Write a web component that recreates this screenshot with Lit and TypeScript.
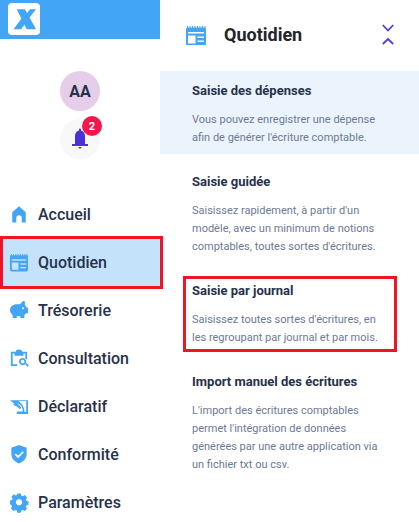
import { LitElement, html, css, svg } from "lit";
import { customElement } from "lit/decorators.js";

const calendar = svg`<path fill-rule="evenodd" d="M1.500 2.500h17A1.500 1.500 0 0 1 20 4v15a1.500 1.500 0 0 1-1.500 1.500h-17A1.500 1.500 0 0 1 0 19V4a1.500 1.500 0 0 1 1.500-1.500zM2 7h16v1.500H2zM2 10.500h7.500v8H2zM11.500 11.500H18V13h-6.500zM11.500 15.500H18V17h-6.500z"/><path d="M1 1h1v2H1zM3.500 1h1v2h-1zM6 1h1v2H6zM8.500 1h1v2h-1zM11 1h1v2h-1zM13.500 1h1v2h-1zM16 1h1v2h-1zM18.500 1h1v2h-1z"/>`;

const icons: Record<string, unknown> = {
  home: svg`<path d="M10 1.500 17.500 8V19.500H13v-5a3 3 0 0 0-6 0v5H2.500V8z"/>`,
  cal: calendar,
  piggy: svg`<path fill-rule="evenodd" d="M15.500 0c.6 0 1 .3 1 1v3.500c1 .7 1.700 1.700 2 3H20v6h-2.200c-.5.800-1.100 1.500-1.800 2V19h-4.500v-2h-4v2H3v-3.300C1.200 14.200 0 12.200 0 10 0 6 3.500 3.500 7.500 3.500H11.500C12.500 1.500 14 0 15.500 0zM14.500 7a1 1 0 1 0 .01 0z"/>`,
  clip: svg`<path fill-rule="evenodd" d="M1 3h5.500a3.500 2.500 0 0 1 7 0H19v8h-2V5h-2v2.500H5V5H3v12h5v2H1z"/><path fill-rule="evenodd" d="M14 10a4 4 0 1 0 .01 0zm0 2a2 2 0 1 1-.01 0zM16.500 16.500l1.400-1.400 3.100 3.100-1.400 1.400z"/>`,
  decl: svg`<path fill-rule="evenodd" d="M0 3.500h20v15.500H7.500v-3H14c1-2.500-1.500-7.500-6-9.500l4.500 5.500-1.500 1.500C8 10 5 9 3 8.500L5 7.500zM9.500 4.500l8.500 0V16.500H16c.5-4-2.500-9-6.500-12z"/>`,
  shield: svg`<path fill-rule="evenodd" d="M10 0 18.500 3v7c0 5-3.500 8.500-8.500 10.500C5 18.500 1.500 15 1.500 10V3zm4 7-5 5-2.500-2.500-1.300 1.300L9 14.600l6.300-6.300z"/>`,
  gear: svg`<path fill-rule="evenodd" d="M8 .5h4l.5 2.400 1.700.7 2.100-1.300 2.700 2.800-1.400 2 .7 1.700 2.200.5v3.800l-2.200.5-.7 1.700 1.400 2-2.700 2.800-2.100-1.300-1.700.7-.5 2.400H8l-.5-2.400-1.700-.7-2.100 1.300-2.700-2.800 1.400-2-.7-1.700L0 12.200V8.400l2.200-.5.700-1.700-1.400-2 2.700-2.800 2.100 1.300 1.700-.7zM10 6.800a3.500 3.500 0 1 0 .01 0z"/>`,
};

const nav = [
  ["home", "Accueil"],
  ["cal", "Quotidien"],
  ["piggy", "Trésorerie"],
  ["clip", "Consultation"],
  ["decl", "Déclaratif"],
  ["shield", "Conformité"],
  ["gear", "Paramètres"],
];

const items: [string, string[], boolean?][] = [
  ["Saisie des dépenses", ["Vous pouvez enregistrer une dépense", "afin de générer l'écriture comptable."], true],
  ["Saisie guidée", ["Saisissez rapidement, à partir d'un", "modèle, avec un minimum de notions", "comptables, toutes sortes d'écritures."]],
  ["Saisie par journal", ["Saisissez toutes sortes d'écritures, en", "les regroupant par journal et par mois."]],
  ["Import manuel des écritures", ["L'import des écritures comptables", "permet l'intégration de données", "générées par une autre application via", "un fichier txt ou csv."]],
];

@customElement("app-root")
export class AppRoot extends LitElement {
  static styles = css`
    :host {
      display: block;
      width: 419px;
      height: 522px;
      overflow: hidden;
      position: relative;
      background: #fff;
      font-family: Roboto, "Liberation Sans", sans-serif;
    }
    .page { display: flex; height: 522px; }
    .left { width: 160px; flex: none; display: flex; flex-direction: column; align-items: stretch; }
    .brand { height: 39px; background: #42a5f5; padding: 3px 0 0 8px; box-sizing: border-box; flex: none; }
    .logo { width: 32px; height: 32px; display: block; }
    .avatar {
      width: 40px; height: 40px; border-radius: 50%; background: #e6cdea; color: #27314b;
      margin: 32px auto 0; display: flex; align-items: center; justify-content: center;
      font-size: 16px; font-weight: 700; flex: none;
    }
    .bell {
      width: 40px; height: 40px; border-radius: 50%; background: #f8f8f8; flex: none;
      margin: 8px auto 0; position: relative; display: flex; align-items: center; justify-content: center;
    }
    .bell svg { width: 18px; height: 22px; display: block; }
    .badge {
      position: absolute; left: 22px; top: -3px; width: 20px; height: 20px; border-radius: 50%;
      background: #f5164e; color: #fff; font-size: 11px; font-weight: 700;
      display: flex; align-items: center; justify-content: center;
    }
    nav { margin-top: 31px; display: flex; flex-direction: column; }
    .nav-item {
      height: 48px; flex: none; display: flex; align-items: center; gap: 10px; padding-left: 10px;
      font-size: 16px; font-weight: 500; color: #27314b;
    }
    .nav-item.on { background: #c5e2fb; }
    .nav-item svg { width: 18px; height: 18px; fill: #42a5f5; flex: none; display: block; overflow: visible; }
    .right { flex: 1; display: flex; flex-direction: column; }
    .head { height: 71px; flex: none; display: flex; align-items: center; padding: 0 25px 2px 26px; box-sizing: border-box; }
    .head .ic { width: 20px; height: 20px; fill: #42a5f5; flex: none; display: block; }
    .head h1 { margin: 0 0 0 18px; font-size: 18px; font-weight: 700; color: #212529; flex: 1; }
    .head .ch { width: 12px; height: 24px; display: block; fill: none; stroke: #4c3fe0; stroke-width: 1.800; }
    .item { padding: 11px 20px 7px 32px; margin-bottom: 8px; }
    .item.on { background: #ebf4fd; }
    .item h2 { margin: 0 0 11px; font-size: 13px; line-height: 18px; font-weight: 700; color: #27314b; }
    .item p { margin: 0; font-size: 11px; line-height: 18px; color: #6c7a93; white-space: nowrap; }
    .mark { position: absolute; border: 3px solid #f01426; box-sizing: border-box; pointer-events: none; }
    .m1 { left: 0; top: 236px; width: 163px; height: 53px; }
    .m2 { left: 183px; top: 276px; width: 214px; height: 76px; }
  `;

  render() {
    return html`
      <div class="page">
        <div class="left">
          <div class="brand">
            <svg class="logo" viewBox="0 0 32 32">
              <rect width="32" height="32" rx="4" fill="#fff"/>
              <path fill="#42a5f5" d="M8.700 6.300H17L28 26.300H18.700z"/>
              <path fill="#42a5f5" d="M22 6.300h6l-7 9-2.800-4zM5.500 26.300 13.500 15.500l4.500 4-5 6.800z"/>
            </svg>
          </div>
          <div class="avatar">AA</div>
          <div class="bell">
            <svg viewBox="0 0 18 22">
              <path fill="#4a33d6" d="M8 1.500a1 1 0 0 1 2 0V2.500c2.500.8 4 2.800 4 5.500v8.500H4V8c0-2.700 1.500-4.700 4-5.500z"/>
              <path fill="#4a33d6" d="M1 16h16v2H1zM7 19h4l-2 2z"/>
            </svg>
            <span class="badge">2</span>
          </div>
          <nav>
            ${nav.map(
              ([ic, label], i) => html`<div class="nav-item ${i === 1 ? "on" : ""}">
                <svg viewBox="0 0 20 20">${icons[ic]}</svg><span>${label}</span>
              </div>`
            )}
          </nav>
        </div>
        <div class="right">
          <div class="head">
            <svg class="ic" viewBox="0 0 20 20">${calendar}</svg>
            <h1>Quotidien</h1>
            <svg class="ch" viewBox="0 0 12 24"><path d="M.8 2 6 7.500 11.200 2M.8 21 6 16l5.200 5"/></svg>
          </div>
          ${items.map(
            ([t, lines, on]) => html`<div class="item ${on ? "on" : ""}">
              <h2>${t}</h2>
              ${lines.map((l) => html`<p>${l}</p>`)}
            </div>`
          )}
        </div>
      </div>
      <div class="mark m1"></div>
      <div class="mark m2"></div>
    `;
  }
}
